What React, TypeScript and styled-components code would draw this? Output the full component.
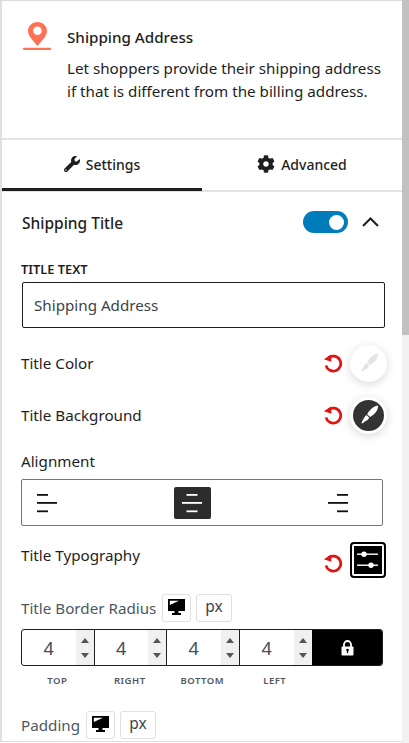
import React from 'react';
import styled, { createGlobalStyle } from 'styled-components';
import { FaWrench, FaCog } from 'react-icons/fa';

const Global = createGlobalStyle`
  html, body {
    margin: 0;
    padding: 0;
    background: #fff;
    overflow: hidden;
  }
  * { box-sizing: border-box; }
`;

const Shell = styled.div`
  width: 409px;
  height: 743px;
  display: flex;
  overflow: hidden;
  font-family: 'Noto Sans', 'Open Sans', sans-serif;
  color: #1e1e1e;
  background: #fff;
`;

const Panel = styled.div`
  width: 402px;
  height: 742px;
  flex: none;
  border-left: 2px solid #e0e0e0;
  border-top: 1px solid #ddd;
  border-bottom: 1px solid #ddd;
  overflow: hidden;
`;

const Scrollbar = styled.div`
  flex: 1;
  background: #f1f1f1;
`;

const Thumb = styled.div`
  height: 335px;
  background: #c1c1c1;
`;

const TopAccent = styled.div`
  width: 80px;
  height: 1px;
  margin: -1px 0 0 76px;
  background: #007cba;
`;

const BlockCard = styled.div`
  height: 139px;
  display: flex;
  padding: 21px 0 0 21px;
  border-bottom: 2px solid #e2e2e2;
`;

const BlockIcon = styled.div`
  width: 44px;
  flex: none;
`;

const BlockText = styled.div`
  padding-top: 5px;
`;

const BlockTitle = styled.div`
  font-size: 15.2px;
  font-weight: 500;
  line-height: 20px;
`;

const BlockDesc = styled.div`
  margin-top: 10px;
  font-size: 15.2px;
  line-height: 23px;
  white-space: nowrap;
`;

const Tabs = styled.div`
  display: flex;
  height: 52px;
  border-bottom: 2px solid #e2e2e2;
`;

const Tab = styled.div<{ $active?: boolean }>`
  width: 200px;
  height: ${p => (p.$active ? '51px' : '50px')};
  display: flex;
  align-items: center;
  justify-content: center;
  gap: 6px;
  font-size: 14px;
  font-weight: 500;
  border-bottom: ${p => (p.$active ? '3px solid #1e1e1e' : 'none')};
  padding-bottom: ${p => (p.$active ? '0' : '2px')};
`;

const Body = styled.div`
  padding: 18px 17px 0 19px;
`;

const SectionHead = styled.div`
  height: 24px;
  display: flex;
  align-items: center;
  padding-left: 1px;
`;

const SectionTitle = styled.div`
  flex: 1;
  padding-top: 2px;
  font-size: 15.5px;
  font-weight: 500;
`;

const Toggle = styled.div`
  width: 45px;
  height: 22px;
  border-radius: 11px;
  background: #007cba;
  display: flex;
  align-items: center;
  justify-content: flex-end;
  padding-right: 4px;
`;

const Knob = styled.span`
  width: 15px;
  height: 15px;
  border-radius: 50%;
  background: #fff;
`;

const Chevron = styled.div`
  width: 37px;
  display: flex;
  justify-content: flex-end;
  padding-right: 6px;
  line-height: 0;
`;

const FieldLabel = styled.div`
  margin-top: 27px;
  font-size: 12.8px;
  font-weight: 600;
  line-height: 16px;
  text-transform: uppercase;
`;

const TextInput = styled.div`
  width: 363px;
  height: 46px;
  margin: 5px 0 0 1px;
  padding-left: 11px;
  display: flex;
  align-items: center;
  border: 1px solid #1e1e1e;
  border-radius: 2px;
  font-size: 15.2px;
  color: #3c434a;
`;

const Row = styled.div<{ $top: number; $h: number }>`
  height: ${p => p.$h}px;
  margin-top: ${p => p.$top}px;
  display: flex;
  align-items: center;
  font-size: 15.2px;
`;

const RowLabel = styled.div<{ $raise?: boolean }>`
  flex: 1;
  padding-bottom: ${p => (p.$raise ? '11px' : '0')};
`;

const ResetIcon = styled.svg<{ $drop?: boolean }>`
  width: 20px;
  height: 20px;
  margin-right: 7px;
  margin-top: ${p => (p.$drop ? '6px' : '0')};
  flex: none;
`;

const Swatch = styled.div<{ $dark?: boolean }>`
  width: 37px;
  height: 37px;
  margin-right: -2px;
  border-radius: 50%;
  flex: none;
  background: ${p => (p.$dark ? '#333' : '#fff')};
  border: 3px solid #fff;
  box-shadow: 0 2px 10px rgba(0, 0, 0, 0.16);
  color: ${p => (p.$dark ? '#fff' : '#e4e4e4')};
  display: flex;
  align-items: center;
  justify-content: center;
`;

const AlignBox = styled.div`
  width: 362px;
  height: 47px;
  margin-top: 4px;
  display: flex;
  align-items: center;
  justify-content: space-between;
  padding: 0 26px 0 6px;
  border: 1px solid #757575;
  border-radius: 2px;
`;

const AlignButton = styled.div<{ $active?: boolean }>`
  width: 37px;
  height: 32px;
  border-radius: 2px;
  display: flex;
  align-items: center;
  justify-content: center;
  background: ${p => (p.$active ? '#2c2c2c' : 'transparent')};
  color: ${p => (p.$active ? '#fff' : '#111')};
`;

const TypoButton = styled.div`
  width: 36px;
  height: 36px;
  margin-right: -1px;
  padding: 2px;
  flex: none;
  border: 2px solid #000;
  border-radius: 4px;
  background: #fff;
`;

const UnitRow = styled.div<{ $top: number }>`
  margin-top: ${p => p.$top}px;
  display: flex;
  align-items: center;
  height: 29px;
  gap: 5px;
  font-size: 15.2px;
  color: #50575e;
`;

const UnitLabel = styled.div<{ $width: number }>`
  width: ${p => p.$width}px;
  white-space: nowrap;
`;

const UnitButton = styled.div<{ $wide?: boolean }>`
  width: ${p => (p.$wide ? '36px' : '29px')};
  height: 28px;
  border: 1px solid #e0e0e0;
  border-radius: 3px;
  display: flex;
  align-items: center;
  justify-content: center;
  padding-bottom: ${p => (p.$wide ? '3px' : '0')};
  font-size: 15.5px;
  color: #3c434a;
`;

const Dimensions = styled.div`
  width: 362px;
  height: 37px;
  margin-top: 7px;
  display: flex;
  border: 1px solid #1e1e1e;
  border-radius: 3px;
  overflow: hidden;
`;

const DimCell = styled.div`
  width: 72.5px;
  flex: none;
  display: flex;
  border-right: 1px solid #1e1e1e;

  &:nth-child(4) {
    border-right: none;
  }
`;

const DimValue = styled.div`
  flex: 1;
  display: flex;
  align-items: center;
  justify-content: center;
  font-size: 18px;
  color: #444b5e;
`;

const Spinner = styled.div`
  width: 18px;
  background: #f0f0f0;
  display: flex;
  flex-direction: column;
  align-items: center;
  justify-content: space-between;
  padding: 8px 0 7px;
`;

const Arrow = styled.span<{ $down?: boolean }>`
  width: 0;
  height: 0;
  border-left: 4.5px solid transparent;
  border-right: 4.5px solid transparent;
  ${p => (p.$down ? 'border-top: 5px solid #555;' : 'border-bottom: 5px solid #555;')}
`;

const LockCell = styled.div`
  flex: 1;
  background: #000;
  display: flex;
  align-items: center;
  justify-content: center;
`;

const DimLabels = styled.div`
  display: flex;
  margin-top: 8px;
`;

const DimLabel = styled.div`
  width: 72.5px;
  text-align: center;
  font-size: 9.5px;
  line-height: 14px;
  font-weight: 600;
  letter-spacing: 0.5px;
  color: #50575e;
`;

const PinIcon = () => (
  <svg width="28" height="29" viewBox="0 0 28 29">
    <path
      fillRule="evenodd"
      fill="#ff7152"
      d="M14.500 0C9.200 0 5 4 5 9c0 5 5.500 10 9.500 15 4-5 9.500-10 9.500-15 0-5-4.200-9-9.500-9zm0 4.500a4.300 4.300 0 1 1 0 8.600 4.300 4.300 0 0 1 0-8.600z"
    />
    <rect x="0" y="25.700" width="28" height="2.400" rx="1" fill="#ff7152" />
  </svg>
);

const Reset = ({ drop }: { drop?: boolean }) => (
  <ResetIcon viewBox="0 0 20 20" $drop={drop}>
    <path d="M5.500 4.800A7.500 7.500 0 1 1 3 12.500" fill="none" stroke="#e41212" strokeWidth="2.800" />
    <path d="M0.800 6.200L8.200 1.500 8.400 8.800z" fill="#e41212" />
  </ResetIcon>
);

const BrushIcon = () => (
  <svg width="22" height="22" viewBox="0 0 22 22" fill="currentColor">
    <path d="M20 1.500c.6 3.500-2.500 8.500-8 11.500l-2.800-2.800C12 5 16.500 2 20 1.500z" />
    <path d="M8.500 11l2.700 2.700c-.6 1.200-1.200 2-2 2.600-1.200 1-2.200.8-3 1.700-.6.7-1.200 1.500-2.700 1.500.3-1.500.7-2.500 1.200-3.200.7-.9.900-1.800 1.600-2.800.5-.8 1.200-1.700 2.200-2.500z" />
  </svg>
);

const AlignIcon = ({ side }: { side: 'left' | 'center' | 'right' }) => {
  const x = side === 'left' ? 0 : side === 'center' ? 4.5 : 9;
  return (
    <svg width="20" height="20" viewBox="0 0 20 20">
      <rect x={x} y="1" width="11" height="1.800" fill="currentColor" />
      <rect x="0" y="9" width="20" height="1.800" fill="currentColor" />
      <rect x={x} y="17.400" width="11" height="1.800" fill="currentColor" />
    </svg>
  );
};

const SlidersIcon = () => (
  <svg width="28" height="28" viewBox="0 0 28 28" style={{ display: 'block' }}>
    <rect width="28" height="28" fill="#000" />
    <rect x="3" y="7.500" width="21" height="1.400" fill="#fff" />
    <circle cx="10" cy="8.200" r="2.700" fill="#fff" />
    <rect x="3" y="18.500" width="21" height="1.400" fill="#fff" />
    <circle cx="17" cy="19.200" r="2.700" fill="#fff" />
  </svg>
);

const MonitorIcon = () => (
  <svg width="17" height="17" viewBox="0 0 17 17">
    <path fill="#000" d="M0 0h17v12H10.500v2H13v2H4v-2h2.500v-2H0z" />
    <path fill="#fff" d="M1.800 1.800H11L1.800 6z" />
  </svg>
);

const LockIcon = () => (
  <svg width="13" height="16" viewBox="0 0 13 16">
    <path d="M3 7V4.500a3.500 3.500 0 0 1 7 0V7" fill="none" stroke="#fff" strokeWidth="1.800" />
    <rect x="0.500" y="6.500" width="12" height="9" rx="1" fill="#fff" />
    <circle cx="6.500" cy="10" r="1.300" fill="#000" />
    <rect x="5.900" y="10" width="1.200" height="3" fill="#000" />
  </svg>
);

const ChevronIcon = () => (
  <svg width="17" height="10" viewBox="0 0 17 10">
    <path d="M1 9l7.500-7.500L16 9" fill="none" stroke="#1e1e1e" strokeWidth="2" />
  </svg>
);

const sides = ['Top', 'Right', 'Bottom', 'Left'];

export default function App() {
  return (
    <Shell>
      <Global />
      <Panel>
        <TopAccent />
        <BlockCard>
          <BlockIcon>
            <PinIcon />
          </BlockIcon>
          <BlockText>
            <BlockTitle>Shipping Address</BlockTitle>
            <BlockDesc>
              Let shoppers provide their shipping address
              <br />
              if that is different from the billing address.
            </BlockDesc>
          </BlockText>
        </BlockCard>
        <Tabs>
          <Tab $active>
            <FaWrench size={16} />
            Settings
          </Tab>
          <Tab>
            <FaCog size={18} />
            Advanced
          </Tab>
        </Tabs>
        <Body>
          <SectionHead>
            <SectionTitle>Shipping Title</SectionTitle>
            <Toggle>
              <Knob />
            </Toggle>
            <Chevron>
              <ChevronIcon />
            </Chevron>
          </SectionHead>
          <FieldLabel>Title Text</FieldLabel>
          <TextInput>Shipping Address</TextInput>
          <Row $top={17} $h={36}>
            <RowLabel>Title Color</RowLabel>
            <Reset />
            <Swatch>
              <BrushIcon />
            </Swatch>
          </Row>
          <Row $top={16} $h={36}>
            <RowLabel>Title Background</RowLabel>
            <Reset />
            <Swatch $dark>
              <BrushIcon />
            </Swatch>
          </Row>
          <Row $top={14} $h={28}>
            <RowLabel>Alignment</RowLabel>
          </Row>
          <AlignBox>
            <AlignButton>
              <AlignIcon side="left" />
            </AlignButton>
            <AlignButton $active>
              <AlignIcon side="center" />
            </AlignButton>
            <AlignButton>
              <AlignIcon side="right" />
            </AlignButton>
          </AlignBox>
          <Row $top={16} $h={36}>
            <RowLabel $raise>Title Typography</RowLabel>
            <Reset drop />
            <TypoButton>
              <SlidersIcon />
            </TypoButton>
          </Row>
          <UnitRow $top={15}>
            <UnitLabel $width={136}>Title Border Radius</UnitLabel>
            <UnitButton>
              <MonitorIcon />
            </UnitButton>
            <UnitButton $wide>px</UnitButton>
          </UnitRow>
          <Dimensions>
            {sides.map(s => (
              <DimCell key={s}>
                <DimValue>4</DimValue>
                <Spinner>
                  <Arrow />
                  <Arrow $down />
                </Spinner>
              </DimCell>
            ))}
            <LockCell>
              <LockIcon />
            </LockCell>
          </Dimensions>
          <DimLabels>
            {sides.map(s => (
              <DimLabel key={s}>{s.toUpperCase()}</DimLabel>
            ))}
          </DimLabels>
          <UnitRow $top={22}>
            <UnitLabel $width={60}>Padding</UnitLabel>
            <UnitButton>
              <MonitorIcon />
            </UnitButton>
            <UnitButton $wide>px</UnitButton>
          </UnitRow>
        </Body>
      </Panel>
      <Scrollbar>
        <Thumb />
      </Scrollbar>
    </Shell>
  );
}
